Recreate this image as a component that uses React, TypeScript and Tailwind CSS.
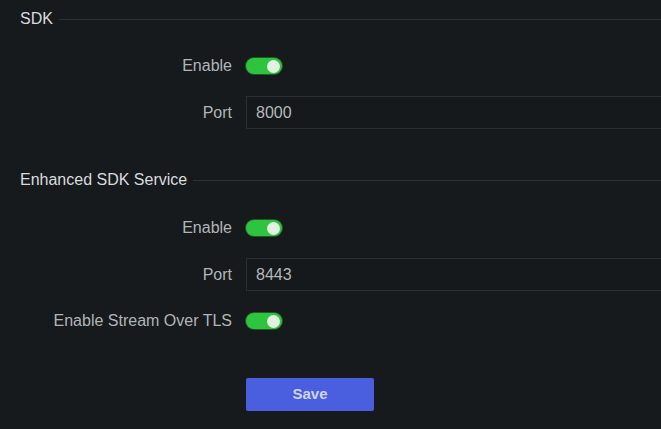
import React from "react";

const font = { fontFamily: '"Liberation Sans", Arial, sans-serif' };

function Toggle() {
  return (
    <div className="relative h-[16px] w-[36px] rounded-full bg-[#2ec43d] shadow-[0_0_0_1px_#1f5a24]">
      <div className="absolute right-[2px] top-[1.5px] h-[13px] w-[13px] rounded-full bg-[#e3f1e3]" />
    </div>
  );
}

function Title({ text }: { text: string }) {
  return (
    <div className="flex h-[18px] items-center gap-[6px] pl-[20px]">
      <span className="whitespace-nowrap text-[16px] leading-[18px] text-[#d9dbdc]">{text}</span>
      <div className="h-px flex-1 bg-[#2d3234]" />
    </div>
  );
}

function Row({ label, children, className }: { label: string; children: React.ReactNode; className?: string }) {
  return (
    <div className={"flex items-center " + (className ?? "")}>
      <div className="w-[232px] shrink-0 whitespace-nowrap text-right text-[16px] leading-[18px] text-[#b1b5b7]">
        {label}
      </div>
      <div className="ml-[14px] flex shrink-0 items-center">{children}</div>
    </div>
  );
}

function PortInput({ value }: { value: string }) {
  return (
    <div className="flex h-[33px] w-[440px] items-center border border-[#2a2f31] bg-[#15191b] pl-[9px] text-[16px] text-[#b5b8ba]">
      {value}
    </div>
  );
}

export default function App() {
  return (
    <div
      className="h-[429px] w-[661px] overflow-hidden bg-[#161a1c] pt-[10px]"
      style={font}
    >
      <Title text="SDK" />
      <Row label="Enable" className="mt-[30px] h-[16px]">
        <Toggle />
      </Row>
      <Row label="Port" className="mt-[22px] h-[33px]">
        <PortInput value="8000" />
      </Row>
      <div className="mt-[42px]">
        <Title text="Enhanced SDK Service" />
      </div>
      <Row label="Enable" className="mt-[31px] h-[16px]">
        <Toggle />
      </Row>
      <Row label="Port" className="mt-[22px] h-[33px]">
        <PortInput value="8443" />
      </Row>
      <Row label="Enable Stream Over TLS" className="mt-[22px] h-[16px]">
        <Toggle />
      </Row>
      <div className="ml-[246px] mt-[49px]">
        <button className="flex h-[33px] w-[128px] items-center justify-center rounded-[2px] bg-[#4a5fdf] text-[15px] font-bold text-[#cdd5f7]">
          Save
        </button>
      </div>
    </div>
  );
}
